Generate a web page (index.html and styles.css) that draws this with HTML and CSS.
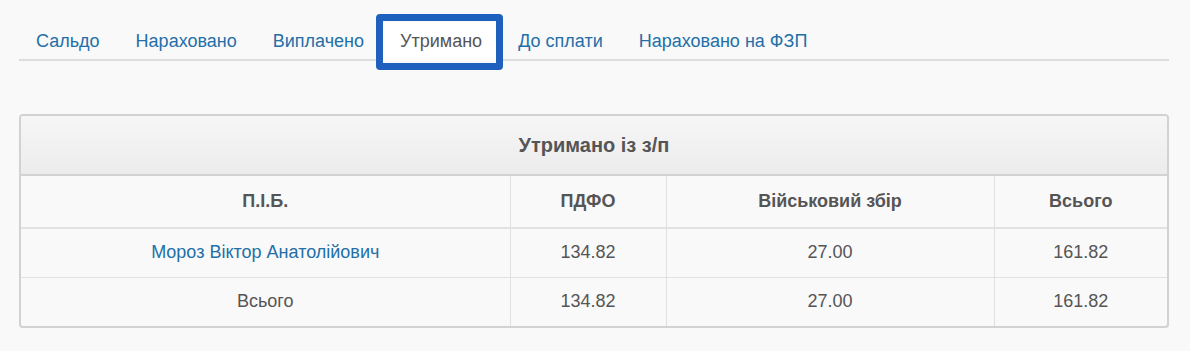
FILE: index.html
```html
<!DOCTYPE html>
<html lang="uk">
<head>
<meta charset="utf-8">
<title>Утримано</title>
<link rel="stylesheet" href="styles.css">
</head>
<body>
<div class="page">
  <ul class="tabs">
    <li class="tab"><a href="#">Сальдо</a></li>
    <li class="tab"><a href="#">Нараховано</a></li>
    <li class="tab"><a href="#">Виплачено</a></li>
    <li class="tab active"><a href="#">Утримано</a><span class="highlight"></span></li>
    <li class="tab"><a href="#">До сплати</a></li>
    <li class="tab"><a href="#">Нараховано на ФЗП</a></li>
  </ul>

  <div class="panel">
    <div class="panel-heading">Утримано із з/п</div>
    <table class="grid">
      <colgroup>
        <col class="c-name">
        <col class="c-pdfo">
        <col class="c-mil">
        <col class="c-total">
      </colgroup>
      <thead>
        <tr>
          <th>П.І.Б.</th>
          <th>ПДФО</th>
          <th>Військовий збір</th>
          <th>Всього</th>
        </tr>
      </thead>
      <tbody>
        <tr>
          <td><a href="#" class="link">Мороз Віктор Анатолійович</a></td>
          <td>134.82</td>
          <td>27.00</td>
          <td>161.82</td>
        </tr>
        <tr>
          <td>Всього</td>
          <td>134.82</td>
          <td>27.00</td>
          <td>161.82</td>
        </tr>
      </tbody>
    </table>
  </div>
</div>
</body>
</html>
```

FILE: styles.css
```css
* { box-sizing: border-box; }

html, body {
  margin: 0;
  padding: 0;
  background: #f9f9f9;
}

body {
  font-family: "Liberation Sans", Arial, sans-serif;
  font-size: 18px;
  color: #555;
}

.page {
  padding: 22px 21px 0 19px;
}

.tabs {
  list-style: none;
  margin: 0;
  padding: 0;
  display: flex;
  border-bottom: 2px solid #dddddd;
}

.tab {
  position: relative;
  margin-right: 2px;
  margin-bottom: -2px;
}

.tab a {
  display: block;
  padding: 9px 17px 10px 17px;
  line-height: 20px;
  height: 39px;
  color: #236fa8;
  text-decoration: none;
  border-radius: 4px 4px 0 0;
}

.tab.active a {
  color: #555;
  background: #ffffff;
}

.highlight {
  position: absolute;
  left: -7px;
  right: -4px;
  top: -8px;
  bottom: -9px;
  border: 7px solid #1f5fbe;
  border-radius: 4px;
  pointer-events: none;
}

.panel {
  margin-top: 53px;
  border: 2px solid #d2d2d2;
  border-radius: 4px;
  background: #f9f9f9;
  overflow: hidden;
  box-shadow: 0 1px 1px rgba(0,0,0,0.05);
}

.panel-heading {
  height: 60px;
  display: flex;
  align-items: center;
  justify-content: center;
  font-size: 20px;
  font-weight: bold;
  color: #555;
  background: linear-gradient(to bottom, #f6f6f6 0%, #ececec 100%);
  border-bottom: 2px solid #d2d2d2;
}

.grid {
  width: 100%;
  border-collapse: collapse;
  table-layout: fixed;
}

.c-name { width: 489px; }
.c-pdfo { width: 156px; }
.c-mil { width: 328px; }
.c-total { width: auto; }

.grid th,
.grid td {
  text-align: center;
  vertical-align: middle;
  padding: 0 8px;
  border-left: 1px solid #e0e0e0;
}

.grid th:first-child,
.grid td:first-child {
  border-left: none;
}

.grid th {
  height: 52px;
  font-weight: bold;
  border-bottom: 2px solid #e2e2e2;
}

.grid td {
  height: 49px;
}

.grid tbody tr + tr td {
  border-top: 1px solid #e2e2e2;
}

.link {
  color: #236fa8;
  text-decoration: none;
}
```
